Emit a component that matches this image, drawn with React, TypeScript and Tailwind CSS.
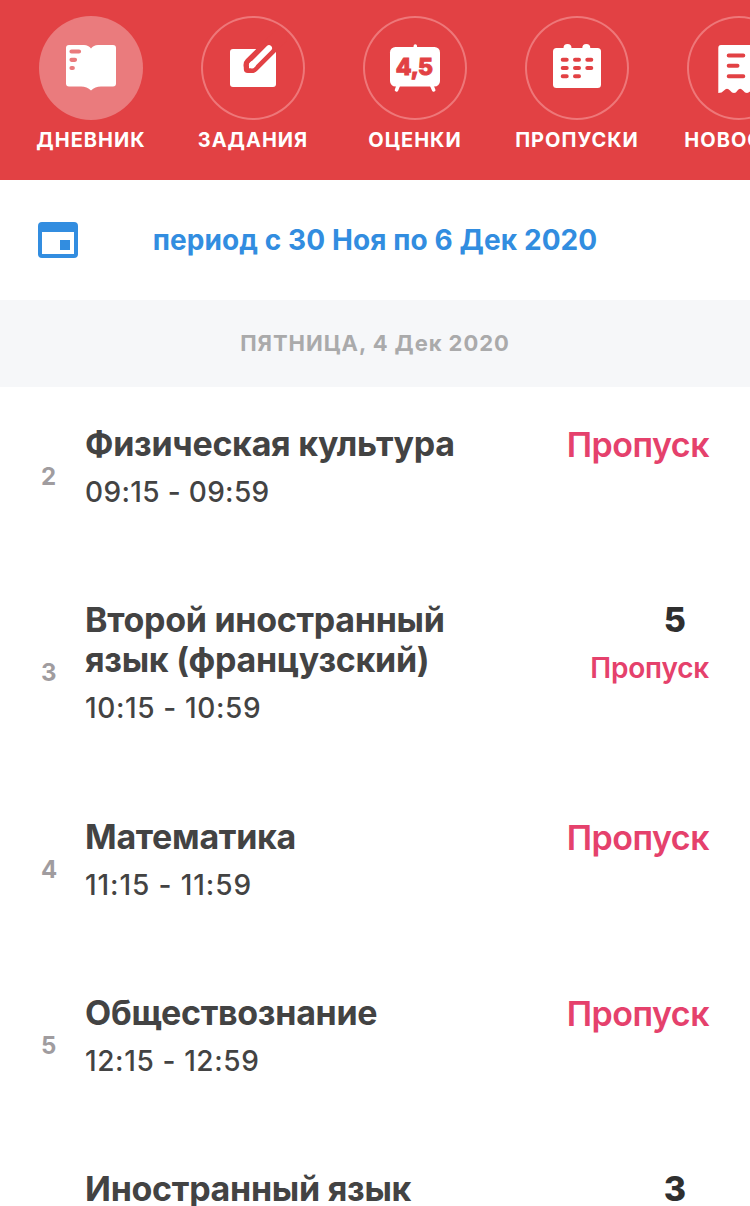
import type { ReactNode } from "react";
import clsx from "clsx";

type Tab = {
  title: string;
  icon: ReactNode;
  active?: boolean;
};

type Lesson = {
  number: number;
  title: string;
  time: string;
  mark?: number;
  absent?: boolean;
};

const RED = "#e24144";

const DiaryIcon = () => (
  <>
    <path
      d="M30 29H45Q49.5 29 52 32.5Q54.500 29 59 29H74Q77 29 77 32V67.500Q77 70.500 74 70.500H62Q56 70.500 52 74.500Q48 70.500 42 70.500H30Q27 70.500 27 67.500V32Q27 29 30 29Z"
      fill="#fff"
    />
    <path d="M32.500 35.500H40M32.500 43.800H36M32.500 52H33.800" stroke="#ea7b7d" strokeWidth="4.200" strokeLinecap="round" />
  </>
);

const TasksIcon = () => (
  <>
    <rect x="29" y="33" width="46" height="38" rx="3" fill="#fff" />
    <path d="M50.500 49L78 21.500" stroke={RED} strokeWidth="16" strokeLinecap="round" />
    <rect x="42.800" y="46" width="12" height="11" rx="4" fill={RED} />
    <path d="M68 32.200L51 49.200" stroke="#fff" strokeWidth="6" strokeLinecap="round" />
    <path d="M48 47.500V52.300H52.500L55 49.800L50.500 45Z" fill="#fff" />
  </>
);

const MarksIcon = () => (
  <>
    <rect x="27" y="31" width="50" height="39.500" rx="5.500" fill="#fff" />
    <path d="M52.300 32V30M35.500 69L33.500 74M68.500 69L70.700 74" stroke="#fff" strokeWidth="3.500" strokeLinecap="round" />
    <text
      y="59.300"
      fill={RED}
      stroke={RED}
      strokeWidth="1"
      className="font-[Inter,sans-serif] text-[23px] font-extrabold"
    >
      <tspan x="32.800">4</tspan>
      <tspan x="47.800">,</tspan>
      <tspan x="55">5</tspan>
    </text>
  </>
);

const AbsenceIcon = () => (
  <>
    <rect x="28" y="32" width="48" height="40" rx="3.500" fill="#fff" />
    <path d="M42.500 32V34M61.300 32V34" stroke="#fff" strokeWidth="8" strokeLinecap="round" />
    <path
      d="M37.700 43.700H41.700M50 43.700H54M62.300 43.700H66.300M37.700 52H41.700M50 52H54M62.300 52H66.300M37.700 60.200H41.700M50 60.200H54"
      stroke={RED}
      strokeWidth="4"
      strokeLinecap="round"
    />
  </>
);

const NewsIcon = () => (
  <>
    <path
      d="M34 29H70Q73 29 73 32V77Q70.500 77 69 74.500Q66.500 71 64 74.500Q62 77 60 77Q58 77 56 74.500Q53 71 50.500 74.500Q49 77 47 77Q45 77 43 74.500Q40 71 37 74.500Q35 77 31.300 77V32Q31.300 29 34 29Z"
      fill="#fff"
    />
    <path d="M41.700 39.400H56.300M41.700 49.800H50.500M41.700 60.200H56.300" stroke={RED} strokeWidth="4" strokeLinecap="round" />
  </>
);

const tabs: Tab[] = [
  { title: "ДНЕВНИК", icon: <DiaryIcon />, active: true },
  { title: "ЗАДАНИЯ", icon: <TasksIcon /> },
  { title: "ОЦЕНКИ", icon: <MarksIcon /> },
  { title: "ПРОПУСКИ", icon: <AbsenceIcon /> },
  { title: "НОВОСТИ", icon: <NewsIcon /> },
];

const lessons: Lesson[] = [
  { number: 2, title: "Физическая культура", time: "09:15 - 09:59", absent: true },
  { number: 3, title: "Второй иностранный язык (французский)", time: "10:15 - 10:59", mark: 5, absent: true },
  { number: 4, title: "Математика", time: "11:15 - 11:59", absent: true },
  { number: 5, title: "Обществознание", time: "12:15 - 12:59", absent: true },
  { number: 6, title: "Иностранный язык", time: "13:15 - 13:59", mark: 3 },
];

// "1" is narrow, so times with many of them get looser spacing
const timeSpacing = (time: string) => `${0.2 + (time.split("1").length - 1) * 0.14}px`;

const LessonRow = ({ number, title, time, mark, absent }: Lesson) => (
  <div className="flex pt-[37px] pb-[49.300px]">
    <div className="flex w-[85px] shrink-0 items-center pt-4 pl-[41px] text-[24px] font-bold text-[#a09c9f]">{number}</div>
    <div className="w-[400px]">
      <h2 className="text-[34px] leading-[40px] font-bold tracking-[-0.280px] text-[#434343]">{title}</h2>
      <p className="pt-[6px] text-[28px] leading-[44px] font-medium text-[#434343]" style={{ letterSpacing: timeSpacing(time) }}>
        {time}
      </p>
    </div>
    <div className="flex grow flex-col items-end pr-[41px]">
      {mark && <span className="pr-[23px] text-[34px] leading-[40px] font-extrabold text-[#2f2f2f]">{mark}</span>}
      {absent && (
        <span
          className={clsx(
            "font-semibold text-[#e5416c]",
            mark ? "pt-2 text-[28px] leading-[40px] tracking-[-0.200px]" : "pt-px text-[34px] leading-[40px] tracking-[-0.500px]"
          )}
        >
          Пропуск
        </span>
      )}
    </div>
  </div>
);

const App = () => {
  return (
    <div className="h-[1206px] w-[750px] overflow-hidden bg-white font-[Inter,sans-serif]">
      {/* Navigation */}
      <nav className="flex h-[180px] overflow-hidden bg-[#e24144] pt-4 pl-[10px]">
        {tabs.map((tab) => (
          <div key={tab.title} className="flex w-[162px] shrink-0 flex-col items-center">
            <div
              className={clsx(
                "size-[104px] rounded-full",
                tab.active ? "bg-[#ea7b7d]" : "shadow-[inset_0_0_0_2px_#ee7779]"
              )}
            >
              <svg viewBox="0 0 104 104" className="size-full" fill="none">
                {tab.icon}
              </svg>
            </div>
            <span className="pt-[6px] text-[20px] leading-[28px] font-bold tracking-[1px] text-white">{tab.title}</span>
          </div>
        ))}
      </nav>

      {/* Selected period */}
      <div className="flex h-[120px] items-center pr-[78px] pl-[38px]">
        <svg viewBox="0 0 40 36" className="h-[36px] w-[40px] shrink-0">
          <path
            d="M4 0H36Q40 0 40 4V32Q40 36 36 36H4Q0 36 0 32V4Q0 0 4 0ZM4 10V32H36V10ZM22 18H32V28H22Z"
            fill="#328de0"
            fillRule="evenodd"
          />
        </svg>
        <p className="grow text-center text-[28px] font-bold tracking-[0.100px] text-[#328de0]">период с 30 Ноя по 6 Дек 2020</p>
      </div>

      <div className="flex h-[87px] items-center justify-center bg-[#f6f7f9] text-[22px] font-bold tracking-[0.940px] text-[#aaaaab]">
        ПЯТНИЦА, 4 Дек 2020
      </div>

      {lessons.map((lesson) => (
        <LessonRow key={lesson.number} {...lesson} />
      ))}
    </div>
  );
};

export default App;
